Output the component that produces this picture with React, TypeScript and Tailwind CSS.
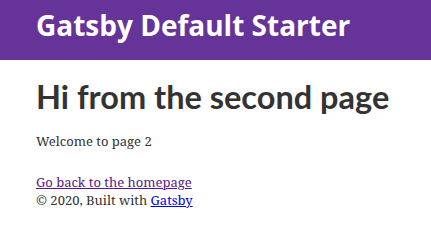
export default function App() {
  return (
    <div className="min-h-[238px] bg-white font-['Noto_Serif',Georgia,serif] text-[#333333]">
      <header className="bg-[#663399] h-[60px] px-[36px] pt-[11px]">
        <h1 className="m-0 font-['Open_Sans',sans-serif] text-[28px] leading-[28px] font-bold text-white whitespace-nowrap">
          Gatsby Default Starter
        </h1>
      </header>
      <main className="flex flex-col items-start px-[36px] pt-[17px]">
        <h2 className="font-['Lato',sans-serif] text-[32.5px] leading-[40px] font-bold whitespace-nowrap">
          Hi from the second page
        </h2>
        <p className="mt-[15px] text-[13px] leading-[18px]">Welcome to page 2</p>
        <a href="#" className="mt-[23px] text-[13px] leading-[18px] text-[#551a8b] underline">
          Go back to the homepage
        </a>
        <footer className="text-[13px] leading-[18px]">
          © 2020, Built with{' '}
          <a href="#" className="text-[#0000ee] underline">
            Gatsby
          </a>
        </footer>
      </main>
    </div>
  );
}
